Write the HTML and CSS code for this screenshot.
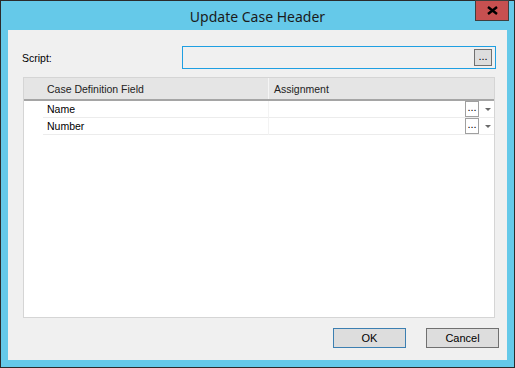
FILE: index.html
```html
<!DOCTYPE html>
<html lang="en">
<head>
    <meta charset="UTF-8">
    <meta name="viewport" content="width=device-width, initial-scale=1.0">
    <title>Update Case Header</title>
    <link rel="stylesheet" href="styles.css">
</head>
<body>
    <div class="window">
        <div class="title-bar">
            <span class="title">Update Case Header</span>
            <button class="close-btn">
                <svg width="11" height="9" viewBox="0 0 11 9">
                    <path d="M1 1 L10 8 M10 1 L1 8" stroke="#000" stroke-width="2.4"/>
                </svg>
            </button>
        </div>
        <div class="client">
            <div class="script-row">
                <span class="label">Script:</span>
                <div class="script-box">
                    <button class="dots-btn">...</button>
                </div>
            </div>
            <div class="grid">
                <div class="grid-head">
                    <div class="row-head"></div>
                    <div class="col-field">Case Definition Field</div>
                    <div class="col-assign">Assignment</div>
                </div>
                <div class="grid-row">
                    <div class="row-head"></div>
                    <div class="col-field">Name</div>
                    <div class="col-assign">
                        <button class="cell-btn">...</button>
                        <span class="arrow"></span>
                    </div>
                </div>
                <div class="grid-row">
                    <div class="row-head"></div>
                    <div class="col-field">Number</div>
                    <div class="col-assign">
                        <button class="cell-btn">...</button>
                        <span class="arrow"></span>
                    </div>
                </div>
            </div>
            <div class="buttons">
                <button class="btn default">OK</button>
                <button class="btn">Cancel</button>
            </div>
        </div>
    </div>
</body>
</html>
```

FILE: styles.css
```css
body {
    margin: 0;
    font-family: "Liberation Sans", Arial, sans-serif;
    font-size: 10.5px;
    color: #000;
}
.window {
    width: 515px;
    height: 368px;
    box-sizing: border-box;
    border: 1px solid #2b2b2b;
    background: #65c9e9;
    display: flex;
    flex-direction: column;
    position: relative;
}
.title-bar {
    height: 29px;
    display: flex;
    align-items: center;
    justify-content: center;
}
.title {
    font-family: "Noto Sans", "Open Sans", sans-serif;
    font-size: 14px;
    color: #1b1b1b;
    margin-top: 1px;
}
.close-btn {
    position: absolute;
    top: -1px;
    right: 5px;
    width: 34px;
    height: 21px;
    border: 1px solid #3f3f3f;
    background: #c75050;
    padding: 0;
    display: flex;
    align-items: center;
    justify-content: center;
}
.client {
    flex: 1;
    margin: 0 7px 7px 7px;
    background: #f0f0f0;
    display: flex;
    flex-direction: column;
}
.script-row {
    margin-top: 16px;
    height: 23px;
    display: flex;
    align-items: center;
    padding-left: 14px;
}
.label {
    width: 160px;
}
.script-box {
    width: 314px;
    height: 23px;
    box-sizing: border-box;
    border: 1px solid #1e9fe2;
    display: flex;
    align-items: center;
    justify-content: flex-end;
    padding-right: 3px;
}
.dots-btn {
    width: 18px;
    height: 17px;
    border: 1px solid #707070;
    background: #dddddd;
    font-family: "Liberation Sans", Arial, sans-serif;
    font-size: 11px;
    padding: 0 0 3px 0;
    line-height: 1;
}
.grid {
    margin: 8px 0 0 15px;
    width: 472px;
    height: 241px;
    box-sizing: border-box;
    border: 1px solid #d5d5d5;
    background: #fff;
}
.grid-head {
    height: 21px;
    background: #e5e5e5;
    border-bottom: 2px solid #a5a5a5;
    display: flex;
    align-items: center;
    color: #222;
}
.grid-head .col-assign {
    border-left: 1px solid #f5f5f5;
    height: 100%;
    display: flex;
    align-items: center;
    padding-left: 5px;
}
.row-head {
    width: 19px;
    flex: none;
}
.col-field {
    width: 221px;
    padding-left: 4px;
    flex: none;
}
.col-assign {
    flex: 1;
}
.grid-row {
    height: 17px;
    display: flex;
    align-items: center;
}
.grid-row .col-field,
.grid-row .col-assign {
    height: 16px;
    border-bottom: 1px solid #ececec;
    display: flex;
    align-items: center;
}
.grid-row .col-assign {
    border-left: 1px solid #f3f3f3;
    justify-content: flex-end;
}
.cell-btn {
    width: 14px;
    height: 16px;
    border: 1px solid #a0a0a0;
    background: #fff;
    font-family: "Liberation Sans", Arial, sans-serif;
    font-size: 11px;
    padding: 0 0 3px 0;
    line-height: 1;
    margin-right: 6px;
}
.arrow {
    width: 0;
    height: 0;
    border-left: 3px solid transparent;
    border-right: 3px solid transparent;
    border-top: 3px solid #6a6a6a;
    margin-right: 3px;
}
.buttons {
    margin-top: 10px;
    display: flex;
    justify-content: flex-end;
    gap: 20px;
    padding-right: 8px;
}
.btn {
    width: 73px;
    height: 20px;
    border: 1px solid #707070;
    background: #dddddd;
    font-family: "Liberation Sans", Arial, sans-serif;
    font-size: 11px;
    padding: 0;
}
.btn.default {
    border-color: #3c7fb1;
}
```
